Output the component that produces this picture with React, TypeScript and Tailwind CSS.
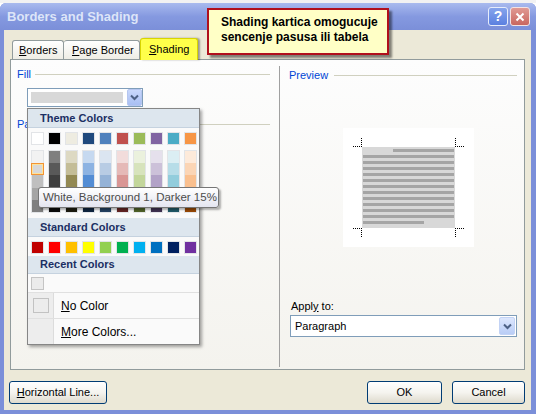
import React from 'react';

const themeRow = ['#ffffff', '#000000', '#eeece1', '#1f497d', '#4f81bd', '#c0504d', '#9bbb59', '#8064a2', '#4bacc6', '#f79646'];

const shades = [
  ['#f2f2f2', '#d8d8d8', '#bfbfbf', '#a5a5a5', '#7f7f7f'],
  ['#7f7f7f', '#595959', '#3f3f3f', '#262626', '#0c0c0c'],
  ['#ddd9c3', '#c4bd97', '#938953', '#494429', '#1d1b10'],
  ['#c6d9f0', '#8db3e2', '#548dd4', '#17365d', '#0f243e'],
  ['#dbe5f1', '#b8cce4', '#95b3d7', '#366092', '#244061'],
  ['#f2dcdb', '#e5b9b7', '#d99694', '#953734', '#632423'],
  ['#ebf1dd', '#d7e3bc', '#c3d69b', '#76923c', '#4f6128'],
  ['#e5e0ec', '#ccc1d9', '#b2a2c7', '#5f497a', '#3f3151'],
  ['#dbeef3', '#b7dde8', '#92cddc', '#31859b', '#205867'],
  ['#fdeada', '#fbd5b5', '#fac08f', '#e36c09', '#974806'],
];

const standardRow = ['#c00000', '#ff0000', '#ffc000', '#ffff00', '#92d050', '#00b050', '#00b0f0', '#0070c0', '#002060', '#7030a0'];

function U({ children }: { children: React.ReactNode }) {
  return <span className="underline underline-offset-[1px]">{children}</span>;
}

function Chevron() {
  return (
    <svg width="9" height="7" viewBox="0 0 9 7">
      <path d="M1 1.5 L4.5 5 L8 1.5" fill="none" stroke="#4d6185" strokeWidth="2" />
    </svg>
  );
}

function MenuHeader({ children, className = '' }: { children: React.ReactNode; className?: string }) {
  return (
    <div
      className={`flex items-center border-b border-[#c5d2df] bg-[#dde6ee] pl-[12px] text-[11px] font-bold text-[#1b2f63] ${className}`}
    >
      {children}
    </div>
  );
}

function XpButton({ children, className = '' }: { children: React.ReactNode; className?: string }) {
  return (
    <div
      className={`flex h-[23px] items-center justify-center rounded-[3px] border border-[#003c74] bg-linear-to-b from-[#ffffff] via-[#f5f4ef] to-[#dedacd] text-[11px] ${className}`}
    >
      {children}
    </div>
  );
}

function PreviewDrawing() {
  const lines = Array.from({ length: 13 }, (_, i) => i);
  return (
    <svg width="131" height="119" viewBox="0 0 131 119">
      <rect x="0" y="0" width="131" height="119" fill="#ffffff" />
      <rect x="19" y="19" width="93" height="81" fill="#d8d8d8" />
      {lines.map((i) => {
        const x = i === 0 ? 50 : 20;
        const w = i === 0 ? 61 : i === 12 ? 61 : 91;
        return <rect key={i} x={x} y={21 + i * 6} width={w} height="3" fill="#a5a5a5" />;
      })}
      <g stroke="#000" strokeWidth="1" strokeDasharray="1 1" fill="none">
        <path d="M10 18.5 H19 M18.5 10 V19" />
        <path d="M112 18.5 H121 M112.5 10 V19" />
        <path d="M10 100.5 H19 M18.5 100 V109" />
        <path d="M112 100.5 H121 M112.5 100 V109" />
      </g>
    </svg>
  );
}

export default function App() {
  return (
    <div className="relative h-[414px] w-[536px] overflow-hidden bg-white font-['Liberation_Sans',Arial,sans-serif] text-[11px] text-black">
      <div className="h-[3px] bg-[#f2f2f2]" />
      <div className="flex h-[411px] flex-col rounded-t-[6px] bg-[#7b8fd9]">
        {/* Title bar */}
        <div className="flex h-[27px] items-center rounded-t-[6px] bg-linear-to-b from-[#a9baee] via-[#8599e0] to-[#7b8fd9] pl-[7px] pr-[6px]">
          <span className="text-[13px] font-bold text-[#dde5f8]">Borders and Shading</span>
          <div className="ml-auto flex gap-[2px]">
            <div className="flex h-[19px] w-[20px] items-center justify-center rounded-[3px] border border-[#e6ecfb] bg-linear-to-b from-[#86a4ec] to-[#5b80e0] text-[14px] font-bold text-white">
              ?
            </div>
            <div className="flex h-[19px] w-[20px] items-center justify-center rounded-[3px] border border-[#f3e2e2] bg-linear-to-b from-[#e09a94] to-[#c9665f]">
              <svg width="10" height="10" viewBox="0 0 10 10">
                <path d="M1.5 1.5 L8.5 8.5 M8.5 1.5 L1.5 8.5" stroke="#fff" strokeWidth="2" />
              </svg>
            </div>
          </div>
        </div>

        {/* Body */}
        <div className="mb-[4px] ml-[4px] mr-[5px] flex flex-1 flex-col bg-[#ece9d8] px-[6px] pt-[8px]">
          {/* Tabs */}
          <div className="flex h-[21px] items-end pl-[2px]">
            <div className="flex h-[19px] w-[52px] items-center rounded-t-[3px] border border-b-0 border-[#919b9c] bg-linear-to-b from-[#ffffff] to-[#eeede5] pl-[6px]">
              <U>B</U>orders
            </div>
            <div className="flex h-[19px] w-[76px] items-center rounded-t-[3px] border border-b-0 border-l-0 border-[#919b9c] bg-linear-to-b from-[#ffffff] to-[#eeede5] pl-[8px]">
              <U>P</U>age Border
            </div>
            <div className="relative z-10 -mb-px flex h-[22px] w-[58px] items-center rounded-t-[3px] border border-b-0 border-[#d8d400] bg-[#ffff4a] pl-[8px] shadow-[2px_0_2px_rgba(0,0,0,0.35)]">
              <U>S</U>hading
            </div>
          </div>

          {/* Panel */}
          <div className="flex h-[311px] border border-[#919b9c] bg-linear-to-b from-[#fdfdfd] to-[#f4f3ee]">
            {/* Left column */}
            <div className="w-[268px]">
              <div className="mt-[8px] flex h-[13px] items-center pl-[6px] pr-[9px]">
                <span className="text-[#0046d5]">Fill</span>
                <div className="ml-[4px] h-px flex-1 bg-[#d0d0bf]" />
              </div>
              <div className="ml-[16px] mt-[7px] flex h-[19px] w-[116px] items-center border border-[#7f9db9] bg-white pl-[3px]">
                <div className="h-[11px] w-[92px] bg-[#d8d8d8]" />
                <div className="ml-auto flex h-[17px] w-[15px] items-center justify-center rounded-[2px] border border-[#b5c6f0] bg-linear-to-b from-[#c9d8fc] to-[#a9bff3]">
                  <Chevron />
                </div>
              </div>
              <div className="mt-[11px] flex h-[13px] items-center pl-[6px] pr-[9px]">
                {/* the colour menu covers the rest of this label */}
                <span className="w-[10px] overflow-hidden whitespace-nowrap text-[#0046d5]">Patterns</span>
                <div className="ml-auto h-px w-[70px] bg-[#d0d0bf]" />
              </div>
            </div>

            {/* Right column */}
            <div className="mb-[2px] mt-[6px] flex-1 border-l border-[#a0a0a0]">
              <div className="mt-[2px] flex h-[14px] items-center pl-[9px] pr-[7px]">
                <span className="text-[#0046d5]">Preview</span>
                <div className="ml-[6px] h-px flex-1 bg-[#d0d0bf]" />
              </div>
              <div className="ml-[63px] mt-[46px] h-[119px] w-[131px]">
                <PreviewDrawing />
              </div>
              <div className="mt-[53px] pl-[11px] leading-[13px]">
                Appl<U>y</U> to:
              </div>
              <div className="ml-[10px] mt-[2px] flex h-[22px] w-[227px] items-center border border-[#7f9db9] bg-white pl-[4px] pr-px">
                <span>Paragraph</span>
                <div className="ml-auto flex h-[18px] w-[16px] items-center justify-center rounded-[2px] border border-[#c3d3f5] bg-linear-to-b from-[#dde7fd] to-[#b9cdf6]">
                  <Chevron />
                </div>
              </div>
            </div>
          </div>

          {/* Bottom buttons */}
          <div className="mt-[11px] flex">
            <XpButton className="-ml-px w-[98px]">
              <span>
                <U>H</U>orizontal Line...
              </span>
            </XpButton>
            <XpButton className="ml-auto w-[75px]">OK</XpButton>
            <XpButton className="ml-[10px] w-[73px]">Cancel</XpButton>
          </div>
        </div>
      </div>

      {/* Callout */}
      <div className="absolute left-[207px] top-[8px] h-[47px] w-[182px] border-2 border-[#b0101c] bg-[#ffffc6] pl-[12px] pt-[5px] text-[12px] font-bold leading-[15px] shadow-[3px_3px_2px_rgba(0,0,0,0.45)]">
        <div>Shading kartica omogucuje</div>
        <div>sencenje pasusa ili tabela</div>
      </div>

      {/* Colour menu */}
      <div className="absolute left-[27px] top-[108px] w-[173px] border border-[#868686] bg-[#fafafa] shadow-[2px_2px_3px_rgba(0,0,0,0.35)]">
        <MenuHeader className="h-[19px]">Theme Colors</MenuHeader>
        <div className="flex gap-[4px] pl-[3px] pt-[4px]">
          {themeRow.map((c) => (
            <div key={c} className="h-[13px] w-[13px] border border-[#e2e4e7]" style={{ backgroundColor: c }} />
          ))}
        </div>
        <div className="mt-[5px] flex gap-[4px] pl-[3px]">
          {shades.map((col, ci) => (
            <div key={ci} className="flex h-[63px] w-[13px] flex-col border border-[#e2e4e7]">
              {col.map((c, ri) => (
                <div key={ri} className="relative flex-1" style={{ backgroundColor: c }}>
                  {ci === 0 && ri === 1 && (
                    <div className="absolute -inset-x-px inset-y-0 border border-[#f29436] shadow-[inset_0_0_0_1px_#fde39b]" />
                  )}
                </div>
              ))}
            </div>
          ))}
        </div>
        <MenuHeader className="mt-[5px] h-[19px]">Standard Colors</MenuHeader>
        <div className="mt-[4px] flex gap-[4px] pl-[3px]">
          {standardRow.map((c) => (
            <div key={c} className="h-[13px] w-[13px] border border-[#e2e4e7]" style={{ backgroundColor: c }} />
          ))}
        </div>
        <MenuHeader className="mt-[2px] h-[18px]">Recent Colors</MenuHeader>
        <div className="mt-[3px] pl-[3px]">
          <div className="h-[13px] w-[13px] border border-[#c4c4c4] bg-[#ebebeb]" />
        </div>
        <div className="mt-[2px] flex h-[26px] border-t border-[#e0e0e0]">
          <div className="flex w-[26px] items-start border-r border-[#dcdcdc] bg-[#ededed] pl-[5px] pt-[5px]">
            <div className="h-[15px] w-[16px] border border-[#c2c2c2] bg-[#ececec]" />
          </div>
          <div className="flex items-center pl-[7px] text-[12px]">
            <U>N</U>o Color
          </div>
        </div>
        <div className="flex h-[26px] border-t border-[#e0e0e0]">
          <div className="w-[26px] border-r border-[#dcdcdc] bg-[#ededed]" />
          <div className="flex items-center pl-[7px] text-[12px]">
            <U>M</U>ore Colors...
          </div>
        </div>
      </div>

      {/* Tooltip */}
      <div className="absolute left-[38px] top-[187px] flex h-[21px] w-[181px] items-center rounded-[3px] border border-[#767676] bg-linear-to-b from-[#ffffff] to-[#e4e5f0] pl-[4px] text-[11.5px] text-[#4c4c4c] shadow-[2px_2px_2px_rgba(0,0,0,0.3)]">
        White, Background 1, Darker 15%
      </div>
    </div>
  );
}
